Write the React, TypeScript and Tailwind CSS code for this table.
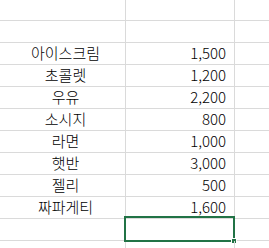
const rows: [string, string][] = [
  ["", ""],
  ["", ""],
  ["아이스크림", "1,500"],
  ["초콜렛", "1,200"],
  ["우유", "2,200"],
  ["소시지", "800"],
  ["라면", "1,000"],
  ["햇반", "3,000"],
  ["젤리", "500"],
  ["짜파게티", "1,600"],
  ["", ""],
  ["", ""],
];

export default function App() {
  return (
    <div
      className="w-[269px] h-[248px] overflow-hidden bg-white text-[15px] font-light text-black"
      style={{ fontFamily: '"Malgun Gothic", "Noto Sans CJK KR", sans-serif' }}
    >
      {rows.map(([name, price], i) => {
        const selected = i === 10;
        return (
          <div
            key={i}
            className={`flex border-b border-[#dadada] ${i === 0 ? "h-[21px]" : "h-[22px]"}`}
          >
            <div className="w-[126px] shrink-0 border-r border-[#dadada] pl-[6px] flex items-center justify-center leading-[21px] pb-[3px]">
              {name}
            </div>
            <div className="relative w-[109px] shrink-0 border-r border-[#dadada] pr-[8px] flex items-center justify-end leading-[21px] pb-[3px]">
              {price}
              {selected && (
                <>
                  <div className="absolute -left-[2px] -top-[3px] -right-[1px] -bottom-[2px] border-2 border-[#217346]" />
                  <div className="absolute -right-[3px] -bottom-[4px] w-[6px] h-[6px] bg-[#217346] border border-white" />
                </>
              )}
            </div>
            <div className="flex-1" />
          </div>
        );
      })}
    </div>
  );
}
